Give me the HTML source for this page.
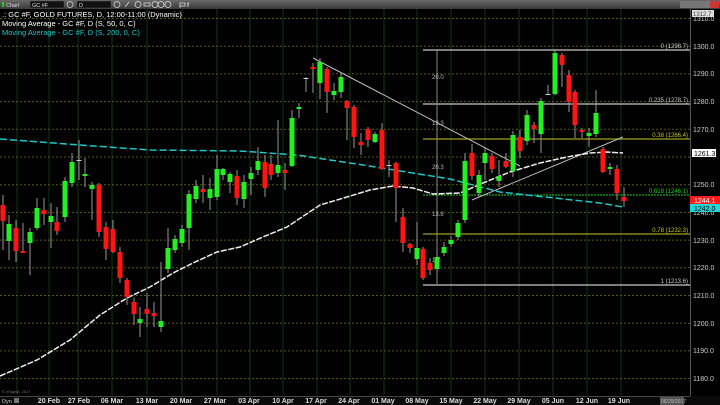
<!DOCTYPE html>
<html><head><meta charset="utf-8"><style>
html,body{margin:0;padding:0;background:#000;width:720px;height:405px;overflow:hidden}
svg{display:block;font-family:"Liberation Sans",sans-serif}
</style></head><body>
<svg width="720" height="405" viewBox="0 0 720 405" xmlns="http://www.w3.org/2000/svg">
<defs><linearGradient id="tb" x1="0" y1="0" x2="0" y2="1"><stop offset="0" stop-color="#6a6a6a"/><stop offset="1" stop-color="#3a3a3a"/></linearGradient></defs>
<rect width="720" height="405" fill="#000"/>
<!-- vertical grid -->
<g stroke="#0f3a0f" stroke-width="1">
<path d="M17 9V395M49 9V395M78 9V395M112 9V395M147 9V395M182 9V395M217 9V395M250 9V395M283 9V395M317 9V395M350 9V395M384 9V395M417 9V395M451 9V395M485 9V395M519 9V395M553 9V395M587 9V395M621 9V395"/>
</g>
<!-- horizontal grid -->
<g stroke="#5a5a10" stroke-width="1" stroke-dasharray="2,2">
<path d="M0 18.5H690M0 46.2H690M0 73.9H690M0 101.6H690M0 129.3H690M0 157H690M0 184.7H690M0 212.4H690M0 240.1H690M0 267.8H690M0 295.5H690M0 323.2H690M0 350.9H690M0 378.6H690"/>
</g>
<!-- fib -->
<path d="M423 50H690M423 104H690M423 285H690" stroke="#c8c8c8" stroke-width="1.2"/>
<path d="M423 139H690M423 234H690" stroke="#a0a020" stroke-width="1.2"/>
<path d="M423 195H690" stroke="#22cc22" stroke-width="1" stroke-dasharray="2,1"/>
<path d="M437 50V285" stroke="#888" stroke-width="1"/>
<g font-size="6" fill="#bbb">
<text x="432" y="79">20.0</text><text x="432" y="125">13.3</text><text x="432" y="169">20.3</text><text x="432" y="216">13.8</text><text x="432" y="262">1.7</text>
</g>
<g font-size="6" text-anchor="end">
<text x="688" y="48" fill="#ccc">0 (1298.7)</text>
<text x="688" y="102" fill="#ccc">0.235 (1278.7)</text>
<text x="688" y="137" fill="#c8c820">0.38 (1266.4)</text>
<text x="688" y="193" fill="#2c2">0.618 (1246.1)</text>
<text x="688" y="232" fill="#c8c820">0.78 (1232.3)</text>
<text x="688" y="283" fill="#ccc">1 (1213.6)</text>
</g>
<!-- trendlines -->
<path d="M313 58L520 166M472 200L623 137" stroke="#bbb" stroke-width="1"/>
<!-- MAs -->
<path d="M0 376L37 360L70 340L100 315L127 298L150 287L173 273L193 263L217 252L240 247L263 237L287 227L320 205L347 197L370 190L393 186L413 188L433 194L460 193L483 183L510 172L540 163L567 157L590 153L607 152L623 153" fill="none" stroke="#eee" stroke-width="1.5" stroke-dasharray="6,1.5"/>
<path d="M0 139L80 145L150 150L240 151L297 155L363 165L450 179L500 192L600 203L623 207" fill="none" stroke="#1cc8c8" stroke-width="1.5" stroke-dasharray="7,3"/>
<!-- wicks -->
<path stroke="#999" stroke-width="1" d="M3 195V250M9 215V260M16 220V262M23 223V253M30 228V275M37 198V230M44 198V225M51 203V248M57 207V235M65 177V222M72 153V187M79 140V180M85 158V187M92 182V220M99 183V237M106 222V260M113 220V253M120 247V283M127 278V305M134 298V325M140 307V337M147 293V327M154 302V327M161 262V332M168 228V273M175 235V253M182 225V247M189 190V250M196 180V203M203 175V203M210 178V210M217 155V200M223 168V180M230 172V193M237 170V205M244 175V208M251 167V195M258 147V175M265 155V197M271 155V180M278 120V177M285 163V190M292 110V167M299 103V118M306 77V92M313 63V93M320 58V99M327 67V113M334 83V100M341 72V98M347 100V140M354 105V148M361 133V155M368 127V147M375 132V143M382 123V170M389 160V177M396 162V222M403 208V252M410 243V253M417 222V265M423 247V280M430 258V275M437 250V273M444 242V256M451 236V247M458 220V240M465 153V223M472 144V180M479 170V197M485 148V180M492 153V173M499 160V187M506 153V168M513 131V177M520 130V158M527 110V145M534 122V143M541 98V153M548 85V95M555 50V95M562 53V87M569 70V112M575 90V138M582 128V138M589 128V147M596 90V137M603 147V173M610 163V175M617 165V200M624 187V207"/>
<!-- red bodies -->
<g fill="#ff1414">
<rect x="0.5" y="205" width="5" height="16"/><rect x="13.5" y="228" width="5" height="23"/><rect x="20.5" y="251" width="5" height="2"/><rect x="41.5" y="210" width="5" height="4"/><rect x="54.5" y="222" width="5" height="9"/><rect x="96.5" y="185" width="5" height="47"/><rect x="103.5" y="227" width="5" height="22"/><rect x="110.5" y="229" width="5" height="23"/><rect x="117.5" y="252" width="5" height="26"/><rect x="124.5" y="280" width="5" height="17"/><rect x="131.5" y="302" width="5" height="12"/><rect x="144.5" y="309" width="5" height="5"/><rect x="151.5" y="313" width="5" height="3"/><rect x="200.5" y="189" width="5" height="3"/><rect x="234.5" y="176" width="5" height="22"/><rect x="262.5" y="162" width="5" height="26"/><rect x="268.5" y="164" width="5" height="11"/><rect x="282.5" y="170" width="5" height="3"/><rect x="310.5" y="67" width="5" height="2"/><rect x="324.5" y="69" width="5" height="23"/><rect x="344.5" y="101" width="5" height="7"/><rect x="351.5" y="107" width="5" height="30"/><rect x="358.5" y="142" width="5" height="3"/><rect x="365.5" y="129" width="5" height="11"/><rect x="379.5" y="130" width="5" height="39"/><rect x="393.5" y="163" width="5" height="25"/><rect x="400.5" y="217" width="5" height="26"/><rect x="407.5" y="244" width="5" height="4"/><rect x="420.5" y="249" width="5" height="29"/><rect x="427.5" y="263" width="5" height="7"/><rect x="469.5" y="153" width="5" height="23"/><rect x="489.5" y="156" width="5" height="13"/><rect x="503.5" y="161" width="5" height="6"/><rect x="517.5" y="137" width="5" height="14"/><rect x="531.5" y="125" width="5" height="4"/><rect x="559.5" y="55" width="5" height="10"/><rect x="566.5" y="75" width="5" height="27"/><rect x="572.5" y="92" width="5" height="33"/><rect x="579.5" y="130" width="5" height="2"/><rect x="600.5" y="149" width="5" height="23"/><rect x="614.5" y="169" width="5" height="24"/><rect x="621.5" y="197" width="5" height="4"/>
</g>
<!-- green bodies -->
<g fill="#22f022">
<rect x="6.5" y="224" width="5" height="17"/><rect x="27.5" y="232" width="5" height="11"/><rect x="34.5" y="208" width="5" height="20"/><rect x="48.5" y="216" width="5" height="6"/><rect x="62.5" y="181" width="5" height="36"/><rect x="69.5" y="162" width="5" height="21"/><rect x="82.5" y="174" width="5" height="2"/><rect x="89.5" y="185" width="5" height="4"/><rect x="137.5" y="319" width="5" height="4"/><rect x="158.5" y="321" width="5" height="6"/><rect x="165.5" y="248" width="5" height="21"/><rect x="172.5" y="239" width="5" height="11"/><rect x="179.5" y="229" width="5" height="14"/><rect x="186.5" y="194" width="5" height="34"/><rect x="193.5" y="186" width="5" height="13"/><rect x="207.5" y="189" width="5" height="9"/><rect x="214.5" y="169" width="5" height="28"/><rect x="220.5" y="169" width="5" height="6"/><rect x="227.5" y="174" width="5" height="8"/><rect x="241.5" y="182" width="5" height="17"/><rect x="248.5" y="173" width="5" height="6"/><rect x="255.5" y="161" width="5" height="9"/><rect x="275.5" y="165" width="5" height="8"/><rect x="289.5" y="118" width="5" height="48"/><rect x="296.5" y="107" width="5" height="2"/><rect x="317.5" y="62" width="5" height="21"/><rect x="331.5" y="91" width="5" height="4"/><rect x="338.5" y="77" width="5" height="15"/><rect x="372.5" y="134" width="5" height="8"/><rect x="414.5" y="248" width="5" height="11"/><rect x="434.5" y="257" width="5" height="12"/><rect x="441.5" y="247" width="5" height="6"/><rect x="448.5" y="240" width="5" height="4"/><rect x="455.5" y="223" width="5" height="14"/><rect x="462.5" y="161" width="5" height="59"/><rect x="476.5" y="175" width="5" height="18"/><rect x="482.5" y="153" width="5" height="10"/><rect x="496.5" y="176" width="5" height="5"/><rect x="510.5" y="135" width="5" height="36"/><rect x="524.5" y="115" width="5" height="26"/><rect x="538.5" y="101" width="5" height="33"/><rect x="552.5" y="53" width="5" height="41"/><rect x="586.5" y="133" width="5" height="3"/><rect x="593.5" y="113" width="5" height="21"/><rect x="607.5" y="167" width="5" height="2"/>
</g>
<g fill="#ccc"><rect x="76.5" y="160" width="5" height="1"/><rect x="303.5" y="78" width="5" height="1"/><rect x="386.5" y="165" width="5" height="1"/><rect x="545.5" y="94" width="5" height="1"/></g>
<!-- right axis -->
<rect x="690" y="9" width="30" height="388" fill="#000"/>
<path d="M690.5 9V397" stroke="#555"/>
<g font-size="7" fill="#ccc">
<text x="693" y="21">1310.0</text><text x="693" y="49">1300.0</text><text x="693" y="76">1290.0</text><text x="693" y="104">1280.0</text><text x="693" y="132">1270.0</text><text x="693" y="187">1250.0</text><text x="693" y="215">1240.0</text><text x="693" y="243">1230.0</text><text x="693" y="270">1220.0</text><text x="693" y="298">1210.0</text><text x="693" y="326">1200.0</text><text x="693" y="353">1190.0</text><text x="693" y="381">1180.0</text>
</g>
<rect x="692" y="10" width="22" height="7" fill="#ddd"/><text x="693" y="16" font-size="6" fill="#444">1312.7</text>
<rect x="692" y="149" width="24" height="8" fill="#fff"/><text x="694" y="156" font-size="7" fill="#000">1261.3</text>
<rect x="690" y="196" width="30" height="8" fill="#ff1a1a"/><text x="694" y="203" font-size="7" fill="#fff">1244.1</text>
<rect x="690" y="204" width="30" height="8" fill="#1cd8d8"/><text x="694" y="211" font-size="7" fill="#000">1242.0</text>
<!-- toolbar -->
<rect x="0" y="0" width="720" height="9" fill="url(#tb)"/>
<rect x="2" y="2" width="2" height="5" fill="#2c2"/>
<text x="6" y="7" font-size="5.5" fill="#ddd">Chart</text>
<rect x="30" y="1" width="34" height="7" fill="#111" stroke="#555" stroke-width=".5"/><text x="32" y="7" font-size="5.5" fill="#ddd">GC #F</text>
<circle cx="70" cy="4.5" r="3" fill="none" stroke="#ccc" stroke-width=".8"/>
<rect x="77" y="1" width="34" height="7" fill="#111" stroke="#555" stroke-width=".5"/><text x="79" y="7" font-size="5.5" fill="#ddd">D</text>
<g fill="none" stroke="#ddd" stroke-width=".8"><circle cx="117" cy="4.5" r="3"/><circle cx="138" cy="4.5" r="3"/><circle cx="155" cy="4.5" r="3"/><circle cx="161" cy="4.5" r="3"/><circle cx="168" cy="4.5" r="3"/><path d="M125 7L129 2M144 3H150V6H144Z M180 3H185V6H181L180 7Z"/></g>
<text x="187" y="7" font-size="6" fill="#ddd" font-weight="bold">f</text>
<rect x="680" y="1" width="30" height="7" fill="#777"/><rect x="710" y="1" width="9" height="7" fill="#c33"/>
<!-- titles -->
<g font-size="7.5">
<text x="2" y="17" fill="#fff">.: GC #F, GOLD FUTURES, D, 12:00-11:00 (Dynamic)</text>
<text x="2" y="26" fill="#fff">Moving Average - GC #F, D (S, 50, 0, C)</text>
<text x="2" y="35" fill="#1cc8c8">Moving Average - GC #F, D (S, 200, 0, C)</text>
</g>
<text x="2" y="393" font-size="4" fill="#777">© eSignal, 2017</text>
<!-- bottom axis -->
<rect x="0" y="396" width="720" height="9" fill="#0a0a0a"/>
<path d="M0 396.5H690" stroke="#444"/>
<text x="2" y="403" font-size="5.5" fill="#ccc">Dyn</text><rect x="14" y="398" width="5" height="5" fill="#777"/>
<g font-size="7" font-weight="bold" fill="#ddd" text-anchor="middle">
<text x="49" y="403">20 Feb</text><text x="79" y="403">27 Feb</text><text x="112" y="403">06 Mar</text><text x="147" y="403">13 Mar</text><text x="181" y="403">20 Mar</text><text x="215" y="403">27 Mar</text><text x="249" y="403">03 Apr</text><text x="283" y="403">10 Apr</text><text x="316" y="403">17 Apr</text><text x="349" y="403">24 Apr</text><text x="383" y="403">01 May</text><text x="417" y="403">08 May</text><text x="451" y="403">15 May</text><text x="485" y="403">22 May</text><text x="519" y="403">29 May</text><text x="553" y="403">05 Jun</text><text x="587" y="403">12 Jun</text><text x="619" y="403">19 Jun</text>
</g>
<rect x="660" y="397" width="24" height="8" fill="#555"/><text x="661" y="403" font-size="5" fill="#bbb">06/29/2017</text>
</svg>
</body></html>
